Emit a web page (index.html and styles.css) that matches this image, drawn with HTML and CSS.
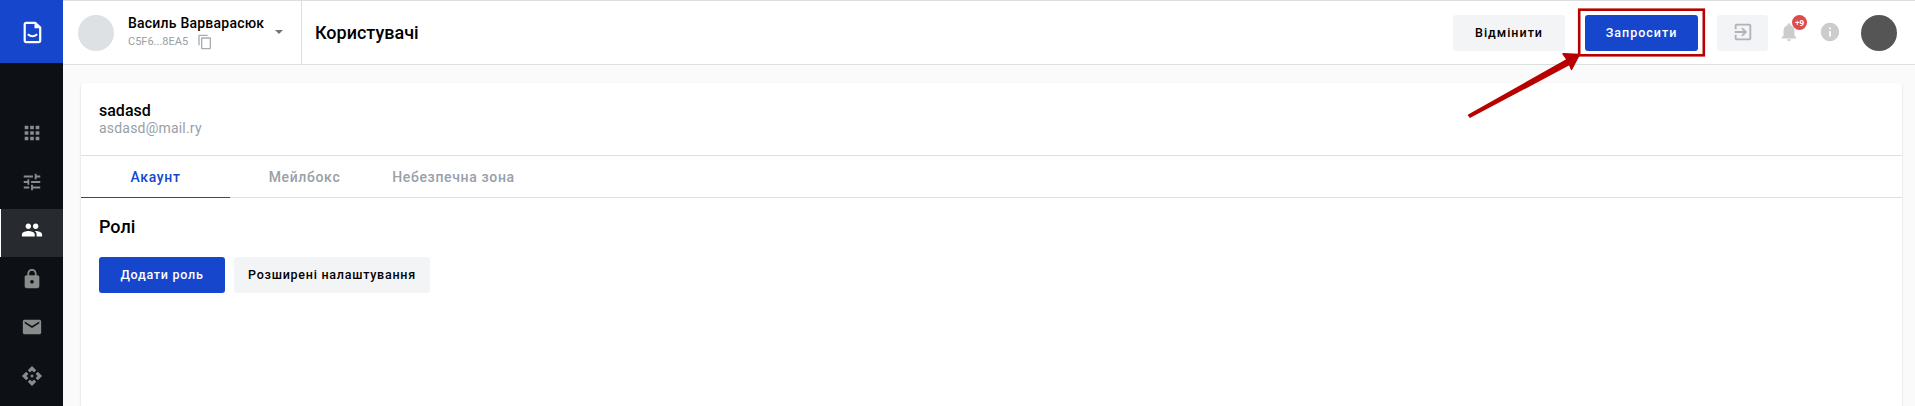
FILE: index.html
```
<!DOCTYPE html>
<html lang="uk">
<head>
<meta charset="utf-8">
<title>Користувачі</title>
<link rel="stylesheet" href="styles.css">
</head>
<body>
<div class="app">
  <aside class="sidebar">
    <a class="logo"><svg width="19" height="23" viewBox="0 0 19 23"><path d="M2.7 1.8H12.2L17.2 6.4V19.5Q17.2 21.2 15.5 21.2H3.4Q1.7 21.2 1.7 19.5V3.4Q1.7 1.8 3.3 1.8Z" fill="none" stroke="#fff" stroke-width="2.2"/><path d="M11.5 2V7.2H17Z" fill="#fff"/><path d="M4.8 13.2Q9.5 17.4 14.2 13.2" fill="none" stroke="#fff" stroke-width="2"/></svg></a>
    <nav class="menu">
      <a class="item"><svg class="icon" viewBox="0 0 24 24"><path d="M4 8h4V4H4v4zm6 12h4v-4h-4v4zm-6 0h4v-4H4v4zm0-6h4v-4H4v4zm6 0h4v-4h-4v4zm6-10v4h4V4h-4zm-6 4h4V4h-4v4zm6 6h4v-4h-4v4zm0 6h4v-4h-4v4z"/></svg></a>
      <a class="item"><svg class="icon" viewBox="0 0 24 24"><path d="M3 17v2h6v-2H3zM3 5v2h10V5H3zm10 16v-2h8v-2h-8v-2h-2v6h2zM7 9v2H3v2h4v2h2V9H7zm14 4v-2H11v2h10zm-6-4h2V7h4V5h-4V3h-2v6z"/></svg></a>
      <a class="item active"><svg class="icon" viewBox="0 0 24 24"><path d="M16 11c1.66 0 2.99-1.34 2.99-3S17.66 5 16 5s-3 1.34-3 3 1.34 3 3 3zm-8 0c1.66 0 2.99-1.34 2.99-3S9.66 5 8 5 5 6.34 5 8s1.34 3 3 3zm0 2c-2.33 0-7 1.17-7 3.5V19h14v-2.500C15 14.170 10.330 13 8 13zm8 0c-.29 0-.62.02-.97.05 1.160.84 1.970 1.970 1.970 3.450V19h6v-2.500c0-2.330-4.670-3.500-7-3.500z"/></svg></a>
      <a class="item"><svg class="icon" viewBox="0 0 24 24"><path d="M18 8h-1V6c0-2.760-2.240-5-5-5S7 3.240 7 6v2H6c-1.100 0-2 .9-2 2v10c0 1.100.9 2 2 2h12c1.100 0 2-.9 2-2V10c0-1.100-.9-2-2-2zm-6 9c-1.100 0-2-.9-2-2s.9-2 2-2 2 .9 2 2-.9 2-2 2zm3.100-9H8.900V6c0-1.710 1.390-3.100 3.100-3.100s3.100 1.390 3.100 3.100v2z"/></svg></a>
      <a class="item"><svg class="icon" viewBox="0 0 24 24"><path d="M20 4H4c-1.100 0-2 .9-2 2v12c0 1.100.9 2 2 2h16c1.100 0 2-.9 2-2V6c0-1.100-.9-2-2-2zm0 4l-8 5-8-5V6l8 5 8-5v2z"/></svg></a>
      <a class="item"><svg class="icon" viewBox="0 0 24 24"><path d="M14 12l-2 2-2-2 2-2 2 2zm-2-6l2.120 2.120 2.500-2.500L12 1 7.380 5.620l2.500 2.500L12 6zm-6 6l2.120-2.120-2.500-2.500L1 12l4.620 4.620 2.500-2.500L6 12zm12 0l-2.120 2.120 2.500 2.500L23 12l-4.620-4.620-2.500 2.500L18 12zm-6 6l-2.120-2.120-2.500 2.500L12 23l4.620-4.620-2.500-2.500L12 18z"/></svg></a>
    </nav>
  </aside>
  <div class="main">
    <header class="header">
      <div class="profile">
        <span class="avatar"></span>
        <div class="who">
          <div class="name">Василь Варварасюк</div>
          <div class="code"><span class="hash">C5F6...8EA5</span><svg class="copy" width="16" height="16" viewBox="0 0 24 24"><path d="M16 1H4c-1.100 0-2 .9-2 2v14h2V3h12V1zm3 4H8c-1.100 0-2 .9-2 2v14c0 1.100.9 2 2 2h11c1.100 0 2-.9 2-2V7c0-1.100-.9-2-2-2zm0 16H8V7h11v14z"/></svg></div>
        </div>
        <span class="caret"></span>
      </div>
      <h1 class="title">Користувачі</h1>
      <div class="actions">
        <button class="btn cancel">Відмінити</button>
        <button class="btn primary invite">Запросити</button>
        <button class="btn exit"><svg width="22" height="22" viewBox="0 0 24 24"><path d="M10.090 15.590L11.500 17l5-5-5-5-1.410 1.410L12.670 11H3v2h9.670l-2.580 2.590zM19 3H5c-1.110 0-2 .9-2 2v4h2V5h14v14H5v-4H3v4c0 1.100.89 2 2 2h14c1.100 0 2-.9 2-2V5c0-1.100-.9-2-2-2z"/></svg></button>
        <span class="bell"><svg width="22" height="22" viewBox="0 0 24 24"><path d="M12 22c1.100 0 2-.9 2-2h-4c0 1.100.89 2 2 2zm6-6v-5c0-3.070-1.640-5.640-4.500-6.320V4c0-.83-.67-1.500-1.500-1.500s-1.500.67-1.500 1.500v.68C7.630 5.360 6 7.920 6 11v5l-2 2v1h16v-1l-2-2z"/></svg><span class="badge">+9</span></span>
        <svg class="info" width="22" height="22" viewBox="0 0 24 24"><path d="M12 2C6.480 2 2 6.480 2 12s4.480 10 10 10 10-4.480 10-10S17.520 2 12 2zm1 15h-2v-6h2v6zm0-8h-2V7h2v2z"/></svg>
        <span class="user"></span>
      </div>
    </header>
    <section class="card">
      <div class="summary">
        <div class="login">sadasd</div>
        <div class="email">asdasd@mail.ry</div>
      </div>
      <div class="tabs">
        <a class="tab current">Акаунт</a>
        <a class="tab">Мейлбокс</a>
        <a class="tab">Небезпечна зона</a>
      </div>
      <div class="panel">
        <h2 class="heading">Ролі</h2>
        <div class="buttons">
          <button class="btn primary add">Додати роль</button>
          <button class="btn advanced">Розширені налаштування</button>
        </div>
      </div>
    </section>
  </div>
</div>
<svg class="callout" width="250" height="120" viewBox="1460 0 250 120"><rect x="1579.200" y="9.700" width="124.600" height="45.600" fill="none" stroke="#b80000" stroke-width="2.600"/><path d="M1468.500 115.200L1567 59.500L1563 53.800L1579.500 54.500L1571.500 69.500L1569.500 64.500L1470 117.200Z" fill="#b80000" stroke="#b80000" stroke-width="1.400" stroke-linejoin="round"/></svg>
</body>
</html>
```
FILE: styles.css
```
* { box-sizing: border-box; }
body { margin: 0; height: 406px; overflow: hidden; background: #fafafa; color: #000; font-family: Roboto, sans-serif; }
.app { display: flex; height: 406px; }
.sidebar { width: 63px; flex: none; background: #0d1116; }
.logo { display: flex; align-items: center; justify-content: center; height: 63px; padding: 1px 0 0 1px; background: #1546cc; }
.menu { padding-top: 49px; }
.item { display: flex; align-items: center; justify-content: center; height: 48px; margin-bottom: .6px; padding: 0 0 6px 1px; }
.active { background: #272a2e; border-left: 1px solid #fff; padding-left: 0; }
.icon { width: 22px; height: 22px; fill: #8a8b8d; }
.active .icon { fill: #fff; }
.main { flex: 1; min-width: 0; display: flex; flex-direction: column; }
.header { display: flex; align-items: center; flex: none; height: 65px; background: #fff; border-top: 1px solid #dcdfe2; border-bottom: 1px solid #dcdfe2; }
.profile { display: flex; align-items: center; height: 63px; width: 239px; padding: 1px 0 0 15px; border-right: 1px solid #dcdfe2; }
.avatar { width: 36px; height: 36px; border-radius: 50%; background: #dee1e4; }
.who { width: 147px; margin-left: 14px; padding-bottom: 3px; }
.name { font-size: 14px; line-height: 18px; font-weight: 500; letter-spacing: .22px; white-space: nowrap; }
.code { display: flex; height: 18px; color: #98a0a8; font-size: 11px; line-height: 19px; }
.hash { width: 69px; }
.copy { fill: #a6adb4; margin-top: 2px; }
.caret { border: 4.500px solid transparent; border-top-color: #757575; border-bottom: 0; margin-bottom: 3px; }
.title { margin: 0 0 0 13px; font-size: 18px; line-height: 24px; font-weight: 500; }
.actions { display: flex; align-items: center; margin-left: auto; padding: 1px 18px 0 0; }
.btn { height: 36px; padding: 0; border: 0; border-radius: 3px; background: #f3f4f6; color: #000; font: 500 12.500px/36px Roboto, sans-serif; letter-spacing: 1px; text-align: center; white-space: nowrap; }
.primary { background: #1546cc; color: #fff; }
.cancel { width: 112px; }
.invite { width: 113px; margin-left: 20px; }
.exit { display: flex; align-items: center; justify-content: center; width: 51px; margin-left: 19px; }
.exit svg { fill: #adb4bb; margin-bottom: 2px; }
.bell { position: relative; display: flex; margin: 0 0 2px 10px; fill: #ccc; }
.badge { position: absolute; left: 14px; top: -6px; width: 15px; height: 15px; border-radius: 50%; background: #de4b4b; color: #fff; font: 700 8px/15px "Open Sans", sans-serif; text-align: center; }
.info { margin: 0 0 2px 19px; fill: #ccc; }
.user { width: 36px; height: 36px; margin-left: 20px; border-radius: 50%; background: #555; }
.card { flex: 1; margin: 18px 13px 0 18px; background: #fff; border-radius: 4px 4px 0 0; box-shadow: 0 1px 2px rgba(0,0,0,.2); }
.summary { height: 73px; padding: 18px 18px 0; border-bottom: 1px solid #dedfe0; }
.login { font-size: 16px; line-height: 20px; font-weight: 500; }
.email { margin-top: -1px; font-size: 14px; line-height: 16px; letter-spacing: .2px; color: #98a0a8; }
.tabs { display: flex; height: 42px; border-bottom: 1px solid #dedfe0; }
.tab { width: 149px; height: 42px; text-align: center; font-size: 14px; line-height: 43px; font-weight: 500; letter-spacing: .65px; color: #98a0a8; white-space: nowrap; }
.current { color: #1546cc; border-bottom: 1px solid #1546cc; }
.panel { padding: 17px 18px; }
.heading { margin: 0; font-size: 18px; line-height: 24px; font-weight: 500; }
.buttons { display: flex; gap: 9px; margin-top: 18px; }
.add { width: 126px; letter-spacing: .75px; }
.advanced { width: 196px; letter-spacing: .75px; }
.callout { position: absolute; left: 1460px; top: 0; }
```
